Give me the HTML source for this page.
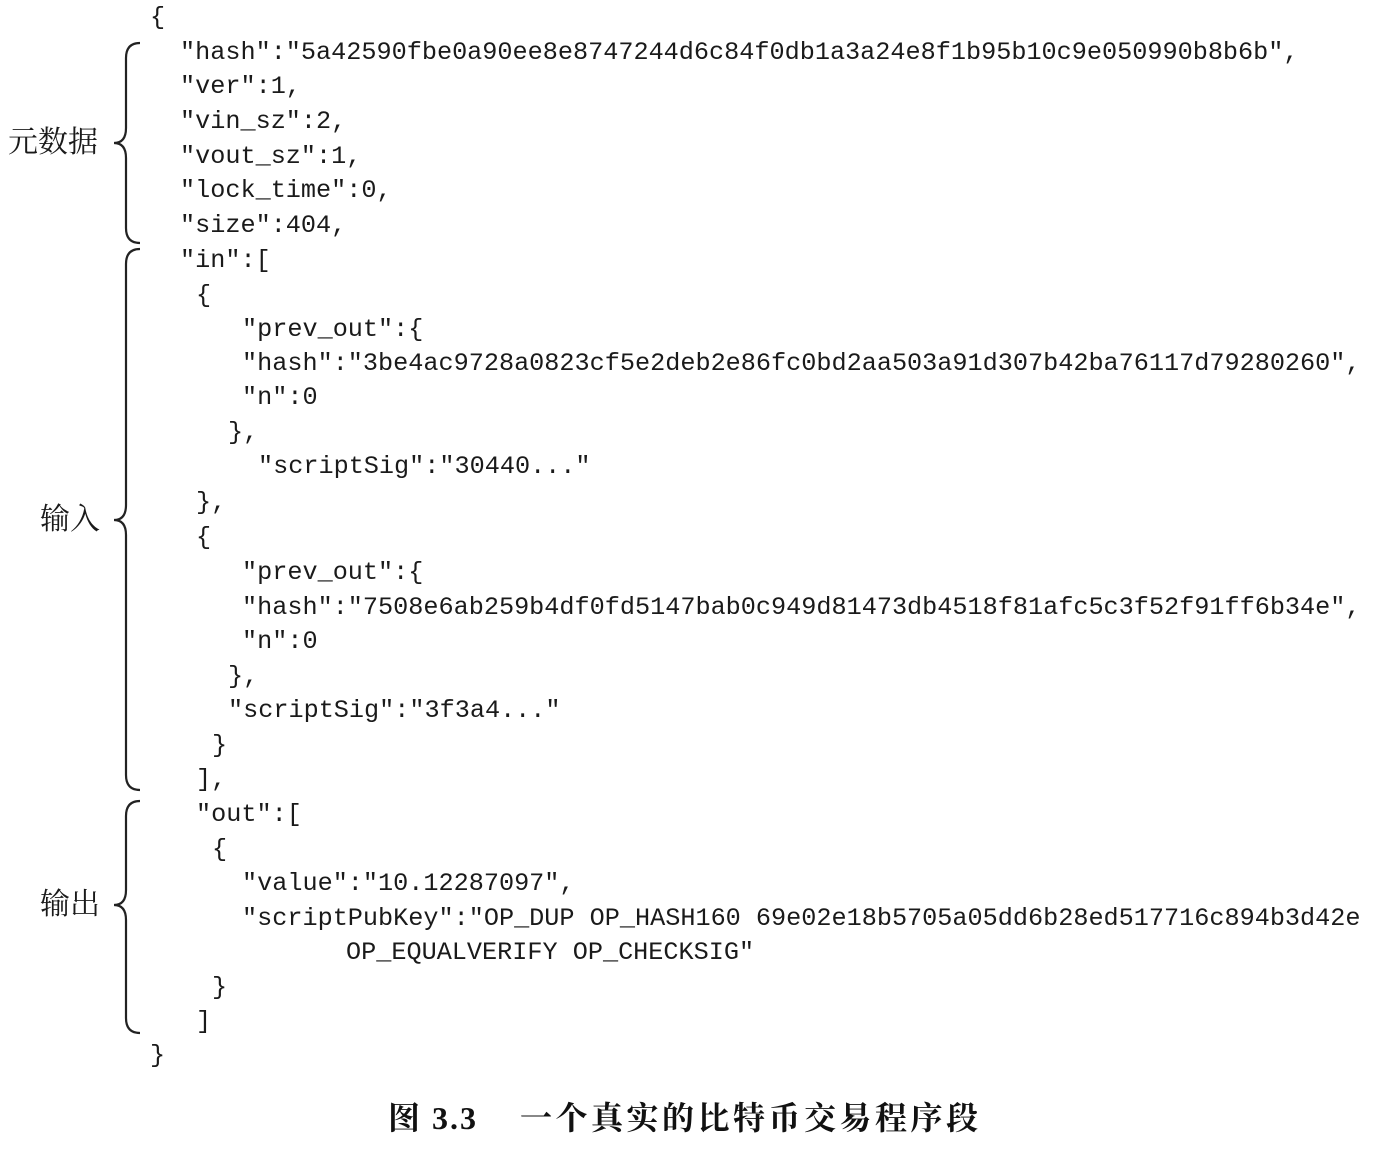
<!DOCTYPE html>
<html><head><meta charset="utf-8"><style>
html,body{margin:0;padding:0;background:#fff;}
body{width:1393px;height:1165px;position:relative;overflow:hidden;}
.l{position:absolute;font-family:"Liberation Mono",monospace;font-size:25.2px;line-height:34px;color:#1a1a1a;white-space:pre;}
.c{position:absolute;font-family:"Liberation Serif","Noto Serif CJK SC",serif;font-size:30px;line-height:34px;color:#1a1a1a;white-space:pre;}
.cap{position:absolute;top:1098px;font-family:"Liberation Serif","Noto Serif CJK SC",serif;font-weight:bold;font-size:32px;line-height:40px;color:#111;white-space:pre;}
</style></head><body>
<div class="l" style="left:150px;top:1px">{</div>
<div class="l" style="left:180px;top:36px">"hash":"5a42590fbe0a90ee8e8747244d6c84f0db1a3a24e8f1b95b10c9e050990b8b6b",</div>
<div class="l" style="left:180px;top:70px">"ver":1,</div>
<div class="l" style="left:180px;top:105px">"vin_sz":2,</div>
<div class="l" style="left:180px;top:140px">"vout_sz":1,</div>
<div class="l" style="left:180px;top:174px">"lock_time":0,</div>
<div class="l" style="left:180px;top:209px">"size":404,</div>
<div class="l" style="left:180px;top:244px">"in":[</div>
<div class="l" style="left:196px;top:279px">{</div>
<div class="l" style="left:242px;top:313px">"prev_out":{</div>
<div class="l" style="left:242px;top:347px">"hash":"3be4ac9728a0823cf5e2deb2e86fc0bd2aa503a91d307b42ba76117d79280260",</div>
<div class="l" style="left:242px;top:381px">"n":0</div>
<div class="l" style="left:228px;top:416px">},</div>
<div class="l" style="left:258px;top:450px">"scriptSig":"30440..."</div>
<div class="l" style="left:196px;top:486px">},</div>
<div class="l" style="left:196px;top:521px">{</div>
<div class="l" style="left:242px;top:556px">"prev_out":{</div>
<div class="l" style="left:242px;top:591px">"hash":"7508e6ab259b4df0fd5147bab0c949d81473db4518f81afc5c3f52f91ff6b34e",</div>
<div class="l" style="left:242px;top:625px">"n":0</div>
<div class="l" style="left:228px;top:660px">},</div>
<div class="l" style="left:228px;top:694px">"scriptSig":"3f3a4..."</div>
<div class="l" style="left:212px;top:729px">}</div>
<div class="l" style="left:196px;top:763px">],</div>
<div class="l" style="left:196px;top:798px">"out":[</div>
<div class="l" style="left:212px;top:833px">{</div>
<div class="l" style="left:242px;top:867px">"value":"10.12287097",</div>
<div class="l" style="left:242px;top:902px">"scriptPubKey":"OP_DUP OP_HASH160 69e02e18b5705a05dd6b28ed517716c894b3d42e</div>
<div class="l" style="left:346px;top:936px">OP_EQUALVERIFY OP_CHECKSIG"</div>
<div class="l" style="left:212px;top:971px">}</div>
<div class="l" style="left:196px;top:1005px">]</div>
<div class="l" style="left:150px;top:1039px">}</div>

<div class="c" style="left:8px;top:126px">元数据</div>
<div class="c" style="left:40px;top:503px">输入</div>
<div class="c" style="left:40px;top:888px">输出</div>

<svg style="position:absolute;left:0;top:0" width="1393" height="1165">
<g fill="none" stroke="#222" stroke-width="2.2">
<path d="M140 43 Q126 43 126 58 L126 128 Q126 143 114 143 Q126 143 126 158 L126 228 Q126 243 140 243"/>
<path d="M140 249 Q126 249 126 264 L126 505 Q126 520 114 520 Q126 520 126 535 L126 775 Q126 790 140 790"/>
<path d="M140 801 Q126 801 126 816 L126 890 Q126 905 114 905 Q126 905 126 920 L126 1018 Q126 1033 140 1033"/>
</g></svg>

<div class="cap" style="left:388px;letter-spacing:2px">图 3.3</div>
<div class="cap" style="left:520px;letter-spacing:3.5px">一个真实的比特币交易程序段</div>
</body></html>
